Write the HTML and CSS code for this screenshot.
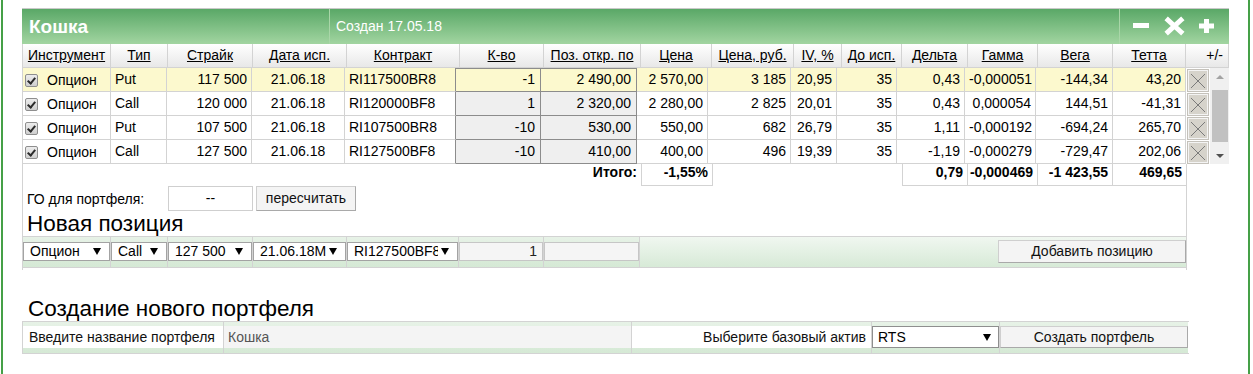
FILE: index.html
```html
<!DOCTYPE html>
<html lang="ru">
<head>
  <meta charset="UTF-8">
  <meta name="viewport" content="width=device-width, initial-scale=1.0">
  <title>Портфель опционов</title>
  <link rel="stylesheet" href="styles.css">
</head>
<body>
  <div class="page">
    <section class="portfolio">
      <div class="pf-head">
        <div class="pf-name">Кошка</div>
        <div class="pf-date">Создан 17.05.18</div>
        <div class="pf-tools">
          <svg width="109" height="35" viewBox="0 0 109 35">
            <rect x="13" y="14" width="16" height="5" fill="#fff"/>
            <path d="M48 11 L61 23 M61 11 L48 23" stroke="#fff" stroke-width="5" stroke-linecap="square"/>
            <rect x="79" y="14.5" width="15" height="5" fill="#fff"/>
            <rect x="84" y="10" width="5" height="14" fill="#fff"/>
          </svg>
        </div>
      </div>

      <div class="grid-head">
        <a href="#">Инструмент</a>
        <a href="#">Тип</a>
        <a href="#">Страйк</a>
        <a href="#">Дата исп.</a>
        <a href="#">Контракт</a>
        <a href="#">К-во</a>
        <a href="#">Поз. откр. по</a>
        <a href="#">Цена</a>
        <a href="#">Цена, руб.</a>
        <a href="#">IV, %</a>
        <a href="#">До исп.</a>
        <a href="#">Дельта</a>
        <a href="#">Гамма</a>
        <a href="#">Вега</a>
        <a href="#">Тетта</a>
        <span class="plus-minus">+/-</span>
      </div>

      <div class="rows-box">
        <div class="rows">
          <div class="row sel">
            <div class="instr"><span class="chk"></span>Опцион</div>
            <div>Put</div>
            <div class="num">117 500</div>
            <div class="ctr">21.06.18</div>
            <div class="contract">RI117500BR8</div>
            <div class="num edit">-1</div>
            <div class="num edit">2 490,00</div>
            <div class="num">2 570,00</div>
            <div class="num">3 185</div>
            <div class="num">20,95</div>
            <div class="num">35</div>
            <div class="num">0,43</div>
            <div class="num">-0,000051</div>
            <div class="num">-144,34</div>
            <div class="num">43,20</div>
            <div class="del"><span class="del-btn"></span></div>
          </div>
          <div class="row">
            <div class="instr"><span class="chk"></span>Опцион</div>
            <div>Call</div>
            <div class="num">120 000</div>
            <div class="ctr">21.06.18</div>
            <div class="contract">RI120000BF8</div>
            <div class="num edit">1</div>
            <div class="num edit">2 320,00</div>
            <div class="num">2 280,00</div>
            <div class="num">2 825</div>
            <div class="num">20,01</div>
            <div class="num">35</div>
            <div class="num">0,43</div>
            <div class="num">0,000054</div>
            <div class="num">144,51</div>
            <div class="num">-41,31</div>
            <div class="del"><span class="del-btn"></span></div>
          </div>
          <div class="row">
            <div class="instr"><span class="chk"></span>Опцион</div>
            <div>Put</div>
            <div class="num">107 500</div>
            <div class="ctr">21.06.18</div>
            <div class="contract">RI107500BR8</div>
            <div class="num edit">-10</div>
            <div class="num edit">530,00</div>
            <div class="num">550,00</div>
            <div class="num">682</div>
            <div class="num">26,79</div>
            <div class="num">35</div>
            <div class="num">1,11</div>
            <div class="num">-0,000192</div>
            <div class="num">-694,24</div>
            <div class="num">265,70</div>
            <div class="del"><span class="del-btn"></span></div>
          </div>
          <div class="row">
            <div class="instr"><span class="chk"></span>Опцион</div>
            <div>Call</div>
            <div class="num">127 500</div>
            <div class="ctr">21.06.18</div>
            <div class="contract">RI127500BF8</div>
            <div class="num edit">-10</div>
            <div class="num edit">410,00</div>
            <div class="num">400,00</div>
            <div class="num">496</div>
            <div class="num">19,39</div>
            <div class="num">35</div>
            <div class="num">-1,19</div>
            <div class="num">-0,000279</div>
            <div class="num">-729,47</div>
            <div class="num">202,06</div>
            <div class="del"><span class="del-btn"></span></div>
          </div>
        </div>
        <div class="vscroll">
          <div class="vs-btn"><span class="tri-up"></span></div>
          <div class="vs-track"><div class="vs-thumb"></div></div>
          <div class="vs-btn"><span class="tri-down"></span></div>
        </div>
      </div>

      <div class="lower">
        <div class="totals">
          <div>Итого:</div>
          <div class="tot-cell first">-1,55%</div>
          <div></div>
          <div class="tot-cell first">0,79</div>
          <div class="tot-cell">-0,000469</div>
          <div class="tot-cell">-1 423,55</div>
          <div class="tot-cell last">469,65</div>
        </div>

        <div class="go-line">
          <span class="go-label">ГО для портфеля:</span>
          <span class="go-val">--</span>
          <span class="btn go-btn">пересчитать</span>
        </div>

        <h2 class="sub-title">Новая позиция</h2>

        <div class="new-row">
          <div><span class="fake-select">Опцион<i class="arr"></i></span></div>
          <div><span class="fake-select">Call<i class="arr"></i></span></div>
          <div><span class="fake-select">127 500<i class="arr"></i></span></div>
          <div><span class="fake-select">21.06.18M<i class="arr"></i></span></div>
          <div><span class="fake-select"><b class="cut">RI127500BF8</b><i class="arr"></i></span></div>
          <div><span class="box-input num">1</span></div>
          <div><span class="box-input"></span></div>
          <div class="add-cell"><span class="btn add-btn">Добавить позицию</span></div>
        </div>
      </div>
    </section>

    <h2 class="sub-title create-title">Создание нового портфеля</h2>

    <div class="create-row">
      <div><span class="c-label">Введите название портфеля</span></div>
      <div><span class="c-input">Кошка</span></div>
      <div><span class="c-label right">Выберите базовый актив</span></div>
      <div><span class="fake-select rts">RTS<i class="arr"></i></span></div>
      <div><span class="btn create-btn">Создать портфель</span></div>
    </div>
  </div>
</body>
</html>
```

FILE: styles.css
```css
body {
  margin: 0;
  font-family: "Liberation Sans", Arial, sans-serif;
  font-size: 14px;
  color: #000;
  background: #fff;
}

.page {
  box-sizing: border-box;
  width: 1249px;
  min-height: 374px;
  margin-left: 1px;
  padding: 8px 0 0 19px;
  border-left: 2px solid #45a047;
  border-right: 2px solid #45a047;
  overflow: hidden;
}

.portfolio {
  width: 1207px;
}

/* green title bar */
.pf-head {
  display: flex;
  height: 35px;
  border-top: 1px solid #c9c9c9;
  background: linear-gradient(#5aa867, #a2d5a1);
  color: #fff;
}

.pf-name {
  box-sizing: border-box;
  width: 308px;
  padding-left: 7px;
  border-right: 1px solid #a9d6a8;
  font-size: 19px;
  font-weight: bold;
  line-height: 35px;
}

.pf-date {
  flex: 1;
  padding-left: 6px;
  border-right: 1px solid #a9d6a8;
  line-height: 35px;
}

.pf-tools {
  width: 109px;
}

.pf-tools svg {
  display: block;
}

/* column headers */
.grid-head {
  display: grid;
  grid-template-columns: 89px 57px 85px 94px 113px 84px 97px 71px 82px 48px 60px 66px 70px 75px 73px 43px;
  height: 24px;
}

.grid-head > * {
  box-sizing: border-box;
  border-right: 1px solid #d3d3d3;
  border-bottom: 1px solid #d3d3d3;
  background: linear-gradient(#fff, #e8e8e8);
  color: #000;
  text-align: center;
  line-height: 23px;
  white-space: nowrap;
}

.grid-head > :first-child {
  border-left: 1px solid #d3d3d3;
}

.grid-head .plus-minus {
  text-align: right;
  padding-right: 5px;
}

/* position rows */
.rows-box {
  display: flex;
}

.row {
  display: grid;
  grid-template-columns: 89px 56px 85px 93px 111px 85px 96px 71px 83px 46px 60px 68px 71px 77px 73px 24px;
  height: 24px;
}

.row > div {
  box-sizing: border-box;
  padding: 0 4px;
  border-right: 1px solid #d3d3d3;
  border-bottom: 1px solid #d3d3d3;
  line-height: 23px;
  white-space: nowrap;
  overflow: hidden;
}

.row > div:first-child {
  border-left: 1px solid #d3d3d3;
}

.row.sel > div {
  background: #fcf9ce;
}

.num {
  text-align: right;
}

.ctr {
  text-align: center;
}

.row > .contract {
  border-right-color: #8c8c8c;
}

.row > .edit {
  background: #efefef;
  border-right-color: #8c8c8c;
  border-bottom-color: #8c8c8c;
  padding-right: 5px;
}

.row:first-child > .edit {
  box-shadow: inset 0 1px 0 #8c8c8c;
}

.row > .instr {
  padding: 1px 0 0 1px;
}

.chk {
  display: inline-block;
  box-sizing: border-box;
  width: 13px;
  height: 13px;
  margin: 0 9px 0 1px;
  vertical-align: -2px;
  border: 1px solid #8e8e8e;
  border-radius: 2px;
  background: linear-gradient(#ececec, #cfcfcf);
  position: relative;
}

.chk::after {
  content: "";
  position: absolute;
  left: 3px;
  top: 1px;
  width: 3px;
  height: 6px;
  border-right: 2px solid #2b2b2b;
  border-bottom: 2px solid #2b2b2b;
  transform: rotate(40deg);
}

.row > .del,
.row.sel > .del {
  border: none;
  padding: 2px 0 0 2px;
  background: #fff;
}

.del-btn {
  display: block;
  box-sizing: border-box;
  width: 20px;
  height: 21px;
  border: 1px solid #f4f4f4;
  outline: 1px solid #c4c1ba;
  background:
    linear-gradient(45deg, transparent 47%, #7a7a7a 47%, #7a7a7a 53%, transparent 53%) center / 14px 14px no-repeat,
    linear-gradient(-45deg, transparent 47%, #7a7a7a 47%, #7a7a7a 53%, transparent 53%) center / 14px 14px no-repeat,
    #d6d3cb;
}

/* fake scrollbar */
.vscroll {
  display: flex;
  flex-direction: column;
  width: 19px;
  height: 96px;
  background: #f0f0f0;
}

.vs-btn {
  height: 17px;
  display: flex;
  align-items: center;
  justify-content: center;
}

.tri-up {
  border-left: 4px solid transparent;
  border-right: 4px solid transparent;
  border-bottom: 4px solid #a3a3a3;
}

.tri-down {
  border-left: 4px solid transparent;
  border-right: 4px solid transparent;
  border-top: 4px solid #505050;
}

.vs-track {
  flex: 1;
}

.vs-thumb {
  height: 52px;
  margin: 5px 1px 0 2px;
  background: #c1c1c1;
}

/* totals and the new position block */
.lower {
  box-sizing: border-box;
  width: 1165px;
  padding-bottom: 2px;
  border-left: 1px solid #d3d3d3;
  border-right: 1px solid #d3d3d3;
}

.totals {
  display: grid;
  grid-template-columns: 618px 72px 189px 66px 70px 75px 73px;
  height: 22px;
}

.totals > div {
  box-sizing: border-box;
  padding-right: 4px;
  font-weight: bold;
  text-align: right;
  line-height: 17px;
}

.totals .tot-cell {
  border-right: 1px solid #d3d3d3;
  border-bottom: 1px solid #d3d3d3;
}

.totals .tot-cell.first {
  border-left: 1px solid #d3d3d3;
}

.totals .tot-cell.last {
  border-right: none;
}

.go-line {
  display: flex;
  align-items: center;
  height: 25px;
}

.go-label {
  width: 145px;
  padding-left: 4px;
  box-sizing: border-box;
}

.go-val {
  box-sizing: border-box;
  width: 85px;
  height: 25px;
  border: 1px solid #cfcfcf;
  text-align: center;
  line-height: 23px;
}

.btn {
  display: block;
  box-sizing: border-box;
  background: #f4f4f4;
  border: 1px solid #cfcfcf;
  border-right-color: #a9a9a9;
  border-bottom-color: #a9a9a9;
  text-align: center;
  color: #111;
}

.go-btn {
  width: 100px;
  height: 25px;
  margin-left: 3px;
  line-height: 23px;
}

.sub-title {
  margin: 0;
  padding-left: 4px;
  font-size: 22.5px;
  font-weight: normal;
  line-height: 25px;
  height: 25px;
}

.new-row {
  display: grid;
  grid-template-columns: 88px 57px 85px 94px 112px 85px 96px 546px;
  border-top: 1px solid #d3d3d3;
  border-bottom: 1px solid #d3d3d3;
}

.new-row > div,
.create-row > div {
  box-sizing: border-box;
  padding: 5px 0 6px;
  border-right: 1px solid #d3d3d3;
  background: linear-gradient(#e7f2e7, #d5e9d5);
}

.new-row > .add-cell {
  border-right: none;
  display: flex;
  justify-content: flex-end;
  padding: 3px 0 4px;
  background: linear-gradient(#f0f7f0, #d7ead7);
}

.fake-select {
  display: flex;
  align-items: center;
  box-sizing: border-box;
  height: 19px;
  padding: 0 8px 0 6px;
  border: 1px solid #a3a3a3;
  background: #fff;
  line-height: 17px;
  white-space: nowrap;
  overflow: hidden;
}

.fake-select .cut {
  font-weight: normal;
  overflow: hidden;
  flex: 1;
  min-width: 0;
}

.arr {
  flex: none;
  margin-left: auto;
  width: 0;
  height: 0;
  border-left: 4px solid transparent;
  border-right: 4px solid transparent;
  border-top: 7px solid #000;
}

.fake-select .cut + .arr {
  margin-left: 3px;
}

.box-input {
  display: block;
  box-sizing: border-box;
  height: 19px;
  padding-right: 5px;
  border: 1px solid #c6c6c6;
  background: #f5f5f5;
  line-height: 17px;
  color: #222;
}

.add-btn {
  width: 188px;
  height: 23px;
  line-height: 21px;
}

/* create portfolio */
.create-title {
  margin-top: 26px;
  padding-left: 6px;
}

.create-row {
  display: grid;
  grid-template-columns: 201px 408px 240px 128px 188px;
  width: 1166px;
  border-left: 1px solid #d3d3d3;
  border-top: 1px solid #d3d3d3;
  border-bottom: 1px solid #d3d3d3;
}

.create-row > div {
  padding: 4px 0 5px;
}

.create-row > div:last-child {
  border-right: none;
}

.c-label,
.c-input {
  display: block;
  height: 22px;
  line-height: 22px;
  white-space: nowrap;
}

.c-label {
  padding-left: 6px;
  background: #fff;
  color: #111;
}

.c-label.right {
  padding: 0 5px 0 0;
  text-align: right;
}

.c-input {
  padding-left: 4px;
  background: #f4f4f4;
  color: #555;
}

.fake-select.rts {
  height: 22px;
  padding-left: 5px;
  padding-right: 7px;
  border-color: #8e8e8e;
}

.create-btn {
  height: 22px;
  line-height: 20px;
}
```
